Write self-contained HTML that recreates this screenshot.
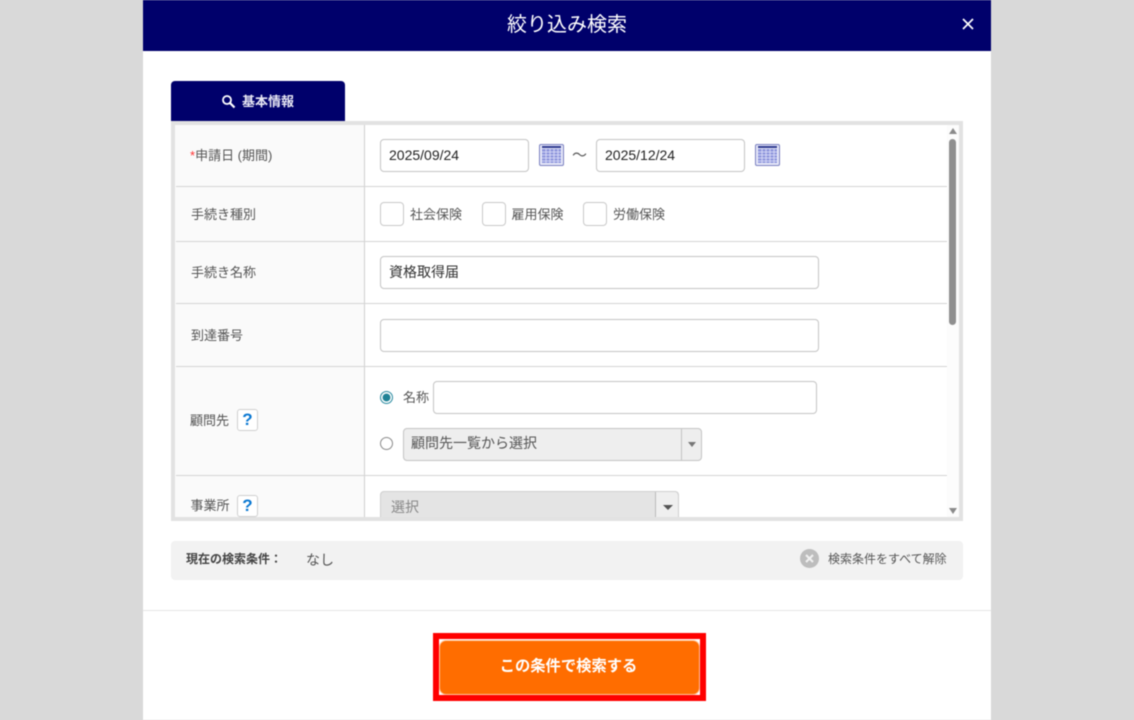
<!DOCTYPE html>
<html lang="ja"><head><meta charset="utf-8">
<style>
html,body{margin:0;padding:0;width:1134px;height:720px;overflow:hidden;background:#d9d9d9;}
body{font-family:"Liberation Sans","Noto Sans CJK JP",sans-serif;color:#555;position:relative;}
#w{position:absolute;left:0;top:0;width:1134px;height:720px;filter:blur(.5px);}
.a{position:absolute;box-sizing:border-box;}
.t{position:absolute;white-space:nowrap;line-height:20px;font-size:13px;color:#555;}
.in{position:absolute;box-sizing:border-box;background:#fff;border:1px solid #c4c4c4;border-radius:4px;color:#222;font-size:14px;line-height:30px;padding-left:8px;}
.cb{position:absolute;box-sizing:border-box;width:24px;height:24px;background:#fff;border:1px solid #c9c9c9;border-radius:4px;}
.hl{position:absolute;left:176px;width:771px;height:1px;background:#d4d4d4;}
.q{position:absolute;box-sizing:border-box;width:21px;height:22px;background:#fff;border:1px solid #d0d0d0;border-radius:3px;color:#0a78d2;font-weight:bold;font-size:17px;line-height:20px;text-align:center;}
</style></head><body><div id="w">
<div class="a" style="left:143px;top:0;width:848px;height:720px;background:#fff"></div>
<div class="a" style="left:143px;top:0;width:848px;height:51px;background:#00006b"></div>
<div class="t" style="left:507px;top:13px;font-size:20px;line-height:24px;color:#fff">絞り込み検索</div>
<svg class="a" style="left:961px;top:17px" width="14" height="14" viewBox="0 0 14 14"><path d="M2 2L12 12M12 2L2 12" stroke="#fff" stroke-width="1.7" fill="none"/></svg>

<div class="a" style="left:171px;top:81px;width:174px;height:40px;background:#00006b;border-radius:4px 4px 0 0"></div>
<svg class="a" style="left:221px;top:94px" width="15" height="15" viewBox="0 0 15 15"><circle cx="6" cy="6" r="4" stroke="#fff" stroke-width="1.8" fill="none"/><path d="M9 9L13.5 13.5" stroke="#fff" stroke-width="2.2"/></svg>
<div class="t" style="left:242px;top:92px;color:#e8e8f4;font-weight:bold;font-size:13px">基本情報</div>

<div class="a" style="left:171px;top:121px;width:792px;height:400px;border:4px solid #e2e2e2;background:#fff"></div>
<div class="a" style="left:175px;top:125px;width:190px;height:392px;background:#fafafa;border-right:1px solid #d0d0d0"></div>
<div class="a" style="left:947px;top:125px;width:12px;height:392px;background:#fcfcfc"></div>
<div class="a" style="left:949px;top:139px;width:7px;height:186px;background:#8f8f8f;border-radius:4px"></div>
<svg class="a" style="left:948px;top:127px" width="10" height="8"><path d="M1 7L5 1L9 7Z" fill="#8a8a8a"/></svg>
<svg class="a" style="left:948px;top:507px" width="10" height="8"><path d="M1 1L5 7L9 1Z" fill="#8a8a8a"/></svg>

<div class="hl" style="top:186px"></div>
<div class="hl" style="top:241px"></div>
<div class="hl" style="top:303px"></div>
<div class="hl" style="top:366px"></div>
<div class="hl" style="top:475px"></div>

<div class="t" style="left:190px;top:146px"><span style="color:#f33">*</span>申請日 (期間)</div>
<div class="in" style="left:380px;top:139px;width:148.5px;height:33px">2025/09/24</div>
<svg class="a" style="left:539px;top:144px" width="25" height="23" viewBox="0 0 25 23"><rect x=".5" y=".5" width="24" height="21" rx="1.5" fill="#e6e8f8" stroke="#7a80c0"/><rect x="3" y="2" width="19" height="2" fill="#2f3a90"/><rect x="3" y="5" width="19" height="14" fill="#8f96dc"/><path d="M3 8h19M3 11h19M3 14h19M3 17h19M7 5v14M11 5v14M15 5v14M19 5v14" stroke="#dfe2fa" stroke-width=".8"/></svg>
<div class="t" style="left:572px;top:146px;font-size:15px">～</div>
<div class="in" style="left:596px;top:139px;width:148.5px;height:33px">2025/12/24</div>
<svg class="a" style="left:755px;top:144px" width="25" height="23" viewBox="0 0 25 23"><rect x=".5" y=".5" width="24" height="21" rx="1.5" fill="#e6e8f8" stroke="#7a80c0"/><rect x="3" y="2" width="19" height="2" fill="#2f3a90"/><rect x="3" y="5" width="19" height="14" fill="#8f96dc"/><path d="M3 8h19M3 11h19M3 14h19M3 17h19M7 5v14M11 5v14M15 5v14M19 5v14" stroke="#dfe2fa" stroke-width=".8"/></svg>

<div class="t" style="left:191px;top:205px">手続き種別</div>
<div class="cb" style="left:380px;top:202px"></div><div class="t" style="left:410px;top:205px">社会保険</div>
<div class="cb" style="left:482px;top:202px"></div><div class="t" style="left:511.5px;top:205px">雇用保険</div>
<div class="cb" style="left:583px;top:202px"></div><div class="t" style="left:613px;top:205px">労働保険</div>

<div class="t" style="left:191px;top:263px">手続き名称</div>
<div class="in" style="left:380px;top:256px;width:438.5px;height:33px;color:#333">資格取得届</div>

<div class="t" style="left:191px;top:326px">到達番号</div>
<div class="in" style="left:380px;top:319px;width:438.5px;height:33px"></div>

<div class="t" style="left:190px;top:411px">顧問先</div>
<div class="q" style="left:237px;top:409px">?</div>
<div class="a" style="left:380px;top:391px;width:13px;height:13px;border-radius:50%;border:1px solid #2a8aa0;background:radial-gradient(circle,#1f8296 0 3.6px,#fff 4.2px)"></div>
<div class="t" style="left:403px;top:388px">名称</div>
<div class="in" style="left:433px;top:381px;width:383.5px;height:33px"></div>
<div class="a" style="left:380px;top:437px;width:13px;height:13px;border-radius:50%;border:1px solid #8a8a8a;background:#fff"></div>
<div class="a" style="left:403px;top:428px;width:299px;height:33px;background:#eee;border:1px solid #c4c4c4;border-radius:4px"></div>
<div class="a" style="left:681px;top:429px;width:1px;height:31px;background:#c4c4c4"></div>
<svg class="a" style="left:687px;top:441px" width="10" height="7"><path d="M1 1H9L5 6Z" fill="#777"/></svg>
<div class="t" style="left:411px;top:433px;font-size:14px">顧問先一覧から選択</div>

<div class="t" style="left:190.5px;top:496px">事業所</div>
<div class="a" style="left:237px;top:495px;width:21px;height:22px;overflow:hidden"><div class="q" style="left:0;top:0">?</div></div>
<div class="a" style="left:380px;top:491px;width:299px;height:26px;background:#e4e4e4;border:1px solid #cfcfcf;border-bottom:0;border-radius:4px 4px 0 0"></div>
<div class="a" style="left:655px;top:492px;width:24px;height:25px;background:#efefef;border-left:1px solid #bbb;border-right:1px solid #cfcfcf;border-radius:0 4px 0 0"></div>
<svg class="a" style="left:662px;top:504px" width="12" height="7"><path d="M1 1H11L6 6Z" fill="#555"/></svg>
<div class="t" style="left:391px;top:497px;font-size:14px;color:#888">選択</div>

<div class="a" style="left:171px;top:541px;width:792px;height:39px;background:#f2f2f2;border-radius:4px"></div>
<div class="t" style="left:186px;top:549px;font-size:12px;font-weight:bold;color:#444">現在の検索条件：</div>
<div class="t" style="left:306px;top:550px;font-size:14px;color:#555">なし</div>
<svg class="a" style="left:800px;top:549px" width="19" height="19" viewBox="0 0 19 19"><circle cx="9.5" cy="9.5" r="9.5" fill="#bdbdbd"/><path d="M6 6L13 13M13 6L6 13" stroke="#f2f2f2" stroke-width="2"/></svg>
<div class="t" style="left:828px;top:549px;font-size:12px;color:#555">検索条件をすべて解除</div>

<div class="a" style="left:143px;top:610px;width:848px;height:1px;background:#e6e6e6"></div>
<div class="a" style="left:433px;top:633px;width:273px;height:68px;background:#fff;border:6px solid #f00"></div>
<div class="a" style="left:439px;top:640px;width:261px;height:55px;background:#ff6d00;border:1px solid #ffc9a0;border-radius:7px"></div>
<div class="a" style="left:438px;top:656px;width:261px;text-align:center;color:#fff;font-weight:bold;font-size:15.3px;line-height:22px">この条件で検索する</div>
</div></body></html>
